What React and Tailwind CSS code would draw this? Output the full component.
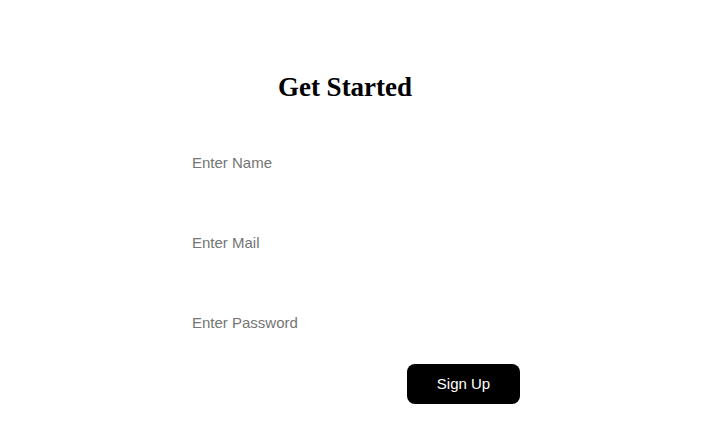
import React from 'react';

function App() {
  return (
    <div className="min-h-[421px] w-[720px] bg-white" style={{ fontFamily: '"Liberation Sans", Arial, sans-serif' }}>
      <div className="ml-[180px] w-[340px] pt-[72px]">
        {/* Heading */}
        <h1
          className="w-[330px] text-center text-[27px] font-bold leading-[30px] text-black"
          style={{ fontFamily: '"Liberation Serif", "Times New Roman", serif' }}
        >
          Get Started
        </h1>
        {/* Fields */}
        <form className="mt-[40px] flex flex-col gap-[40px]" onSubmit={(e) => e.preventDefault()}>
          <input
            type="text"
            placeholder="Enter Name"
            className="h-[40px] w-[330px] px-3 text-[15px] outline-none placeholder:text-[#757575]"
          />
          <input
            type="email"
            placeholder="Enter Mail"
            className="h-[40px] w-[330px] px-3 text-[15px] outline-none placeholder:text-[#757575]"
          />
          <input
            type="password"
            placeholder="Enter Password"
            className="h-[40px] w-[330px] px-3 text-[15px] outline-none placeholder:text-[#757575]"
          />
        </form>
        <button className="ml-[227px] mt-[22px] h-[40px] w-[113px] rounded-lg bg-black text-[15px] text-white">
          Sign Up
        </button>
      </div>
    </div>
  );
}

export default App;
